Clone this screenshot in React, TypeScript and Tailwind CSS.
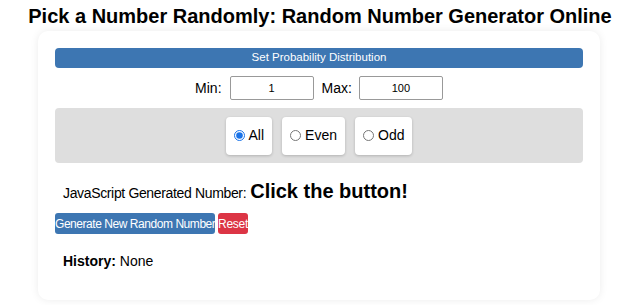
export default function App() {
  return (
    <div className="min-h-[305px] bg-white pt-[4px] font-['Liberation_Sans',Arial,sans-serif] text-black">
      <h1 className="text-center text-[20px] font-bold leading-[24px]">
        Pick a Number Randomly: Random Number Generator Online
      </h1>
      <div className="ml-[38px] mr-[40px] mt-[3px] h-[269px] rounded-[10px] bg-white px-[17px] pt-[17px] shadow-[0_0_8px_rgba(0,0,0,0.08)]">
        <div className="flex h-[20px] items-center justify-center rounded-[4px] bg-[#3d76b2] text-[11.5px] text-white">
          Set Probability Distribution
        </div>

        <div className="mt-[8px] flex items-center justify-center text-[14px]">
          <span className="mr-[8px]">Min:</span>
          <input
            defaultValue="1"
            className="h-[24px] w-[84px] rounded-[2px] border border-[#999] text-center text-[11px] text-black outline-none"
          />
          <span className="ml-[8px] mr-[7px]">Max:</span>
          <input
            defaultValue="100"
            className="h-[24px] w-[84px] rounded-[2px] border border-[#999] text-center text-[11px] text-black outline-none"
          />
        </div>

        <div className="mt-[8px] flex h-[55px] items-center justify-center gap-[10px] rounded-[4px] bg-[#dedede]">
          {[
            { label: "All", checked: true },
            { label: "Even", checked: false },
            { label: "Odd", checked: false },
          ].map((opt) => (
            <label
              key={opt.label}
              className="flex h-[38px] items-center gap-[4px] rounded-[4px] bg-white px-[8px] text-[14px] shadow-[0_1px_3px_rgba(0,0,0,0.2)]"
            >
              <input
                type="radio"
                name="dist"
                defaultChecked={opt.checked}
                className="m-0 h-[11px] w-[11px] accent-[#1a73e8]"
              />
              {opt.label}
            </label>
          ))}
        </div>

        <div className="mt-[13px] flex items-baseline pl-[8px]">
          <span className="text-[14px] tracking-[-0.35px]">JavaScript Generated Number:</span>
          <span className="ml-[4px] text-[20px] font-bold">Click the button!</span>
        </div>

        <div className="mt-[7px] flex gap-[3px]">
          <button className="h-[21px] w-[160px] whitespace-nowrap rounded-[3px] bg-[#3d76b2] px-0 text-[12px] tracking-[-0.45px] text-white">
            Generate New Random Number
          </button>
          <button className="h-[21px] w-[30px] whitespace-nowrap rounded-[3px] bg-[#dc3545] px-0 text-[12px] tracking-[-0.3px] text-white">
            Reset
          </button>
        </div>

        <div className="mt-[17px] pl-[8px] text-[14px]">
          <span className="font-bold">History:</span> None
        </div>
      </div>
    </div>
  );
}
